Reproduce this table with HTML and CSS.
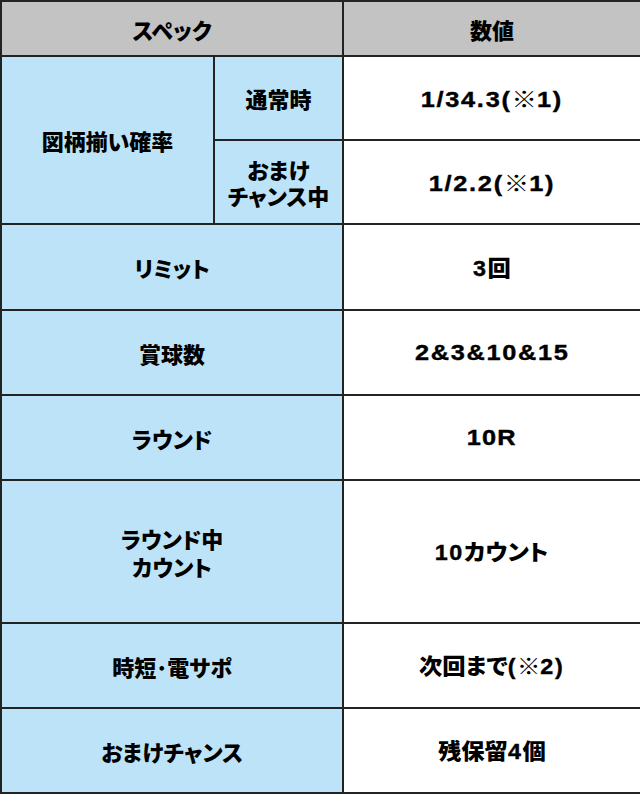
FILE: index.html
```html
<!DOCTYPE html>
<html lang="ja">
<head>
<meta charset="utf-8">
<link rel="stylesheet" href="styles.css">
</head>
<body>
<table class="spec">
  <colgroup>
    <col class="c1">
    <col class="c2">
    <col class="c3">
  </colgroup>
  <thead>
    <tr class="r-head">
      <th colspan="2">スペック</th>
      <th>数値</th>
    </tr>
  </thead>
  <tbody>
    <tr class="r-84">
      <th rowspan="2">図柄揃い確率</th>
      <th>通常時</th>
      <td class="num"><span class="val">1/34.3(<span class="jp">※</span>1)</span></td>
    </tr>
    <tr class="r-84">
      <th class="two">おまけ<br>チャンス中</th>
      <td class="num"><span class="val">1/2.2(<span class="jp">※</span>1)</span></td>
    </tr>
    <tr class="r-86">
      <th colspan="2">リミット</th>
      <td class="num"><span class="val mix">3<span class="jp">回</span></span></td>
    </tr>
    <tr class="r-85">
      <th colspan="2">賞球数</th>
      <td class="num"><span class="val">2&amp;3&amp;10&amp;15</span></td>
    </tr>
    <tr class="r-85">
      <th colspan="2">ラウンド</th>
      <td class="num"><span class="val short">10R</span></td>
    </tr>
    <tr class="r-tall">
      <th colspan="2" class="two tall">ラウンド中<br>カウント</th>
      <td class="num"><span class="val mix">10<span class="jp">カウント</span></span></td>
    </tr>
    <tr class="r-85">
      <th colspan="2">時短･電サポ</th>
      <td class="num"><span class="val mix"><span class="jp">次回まで</span>(<span class="jp">※</span>2)</span></td>
    </tr>
    <tr class="r-85">
      <th colspan="2">おまけチャンス</th>
      <td class="num"><span class="val mix"><span class="jp">残保留</span>4<span class="jp">個</span></span></td>
    </tr>
  </tbody>
</table>
</body>
</html>
```

FILE: styles.css
```css
html, body {
  margin: 0;
  padding: 0;
  background: #ffffff;
}

.spec {
  width: 640px;
  border-collapse: collapse;
  table-layout: fixed;
  font-family: "Noto Sans CJK JP", "Liberation Sans", sans-serif;
  font-weight: 900;
  color: #000000;
}

.c1 { width: 213px; }
.c2 { width: 129px; }
.c3 { width: 298px; }

.spec th,
.spec td {
  border: 2px solid #232323;
  padding: 0;
  text-align: center;
  vertical-align: middle;
  font-size: 22px;
  line-height: 26px;
  font-weight: 900;
  font-feature-settings: "palt" 1;
}

.spec thead th {
  background: #c3c3c3;
}

.spec tbody th {
  background: #bce3f8;
}

.spec td {
  background: #ffffff;
}

.two { line-height: 25px; }
.two.tall { line-height: 28px; }

.r-head { height: 55px; }
.r-84 { height: 84px; }
.r-85 { height: 85px; }
.r-86 { height: 86px; }
.r-tall { height: 143px; }

.num {
  font-family: "Liberation Sans", "Noto Sans CJK JP", sans-serif;
  font-size: 25px;
  font-weight: 700;
  letter-spacing: 1.5px;
  -webkit-text-stroke: 0.4px #000000;
}

.val {
  display: inline-block;
  transform: scaleX(1.15);
}

.val.mix {
  transform: scaleX(1.06);
}

.val.short {
  letter-spacing: 1px;
}

.jp {
  font-family: "Noto Sans CJK JP", sans-serif;
  font-size: 22px;
  font-weight: 900;
  letter-spacing: 0;
  -webkit-text-stroke: 0;
}
```
